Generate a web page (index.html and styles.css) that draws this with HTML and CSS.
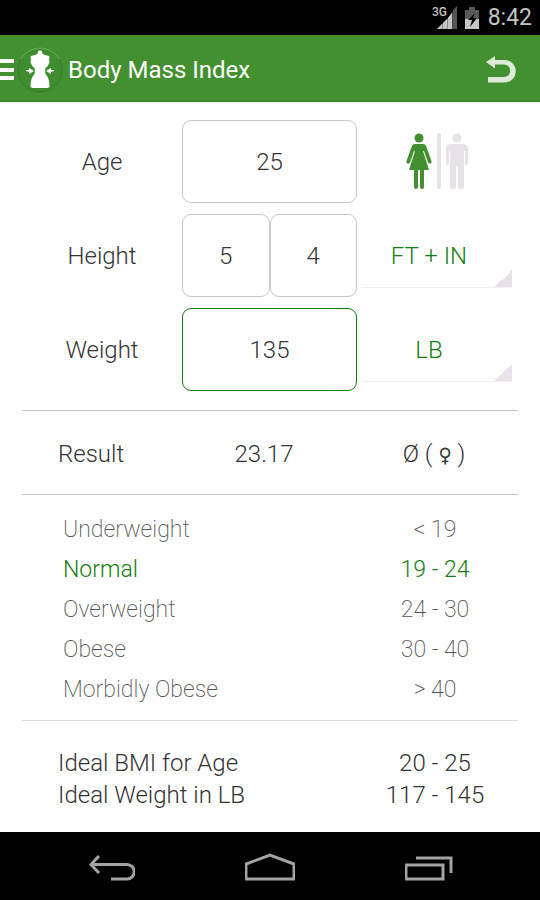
FILE: index.html
```html
<!DOCTYPE html>
<html lang="en">
<head>
<meta charset="utf-8">
<meta name="viewport" content="width=device-width, initial-scale=1">
<title>Body Mass Index</title>
<link rel="stylesheet" href="styles.css">
</head>
<body>
<div class="status">
  <svg class="status-signal" viewBox="0 0 24 24" aria-label="Signal">
    <path fill="#555" d="M19 4l4-4v23h-4z"/>
    <path fill="#888" d="M3 23L14 12l4.500-6v17z"/>
    <path fill="#c4c4c4" d="M3 23l5-5v5zM9 17l4-4v10H9zM14 12l4-5v16h-4z"/>
  </svg>
  <span class="status-net">3G</span>
  <svg class="status-battery" viewBox="0 0 16 22" aria-label="Battery">
    <path fill="#5a5a5a" d="M1 3h4V0h6v3h4v9H1z"/>
    <path fill="#c4c4c4" d="M1 12h14v10H1z"/>
    <path fill="#000" d="M11 6L4 13h4l-2 7 7-9H9z"/>
  </svg>
  <span class="status-time">8:42</span>
</div>
<header class="bar">
  <button class="menu" type="button" aria-label="Menu">
    <svg class="menu-lines" viewBox="0 0 14 22"><path fill="#fff" d="M0 0h14v4H0zM0 9h14v4H0zM0 17h14v4H0z"/></svg>
    <svg class="logo" viewBox="0 0 48 48">
      <circle cx="24" cy="24" r="22" fill="#408d2f" stroke="#387d2a"/>
      <path d="M5 13A22 22 0 0 1 43 13" fill="none" stroke="#76b166"/>
      <path fill="#fff" d="M22 5q2-1 4 0l.5 3q3 1.500 7 2-1 3 0 6-1 4-4 6-1 3 0 6 4 4 4 12 0 2-3.500 2H18q-3.500 0-3.500-2 0-8 4-12 1-3 0-6-3-2-4-6 1-3 0-6 4-.5 7-2z"/>
      <path fill="#fff" d="M10 24h3v-2l5 3-5 3v-2l-3-1zM38 24h-3v-2l-5 3 5 3v-2l3-1z"/>
    </svg>
  </button>
  <h1 class="title">Body Mass Index</h1>
  <button class="undo" type="button" aria-label="Undo">
    <svg class="undo-icon" viewBox="0 0 30 27"><path fill="#deebd9" d="M0 6l9-6v4h9.500a11.250 11.250 0 0 1 0 22.500H2V21h16a6.250 6.250 0 0 0 0-12.500H9V12.500z"/></svg>
  </button>
</header>
<main class="content">
  <form class="form">
    <label class="name" for="age">Age</label>
    <input class="box" id="age" type="text" inputmode="numeric" value="25">
    <fieldset class="gender">
      <label class="person person-on">
        <input class="radio" type="radio" name="gender" aria-label="Female" checked>
        <svg class="woman" viewBox="0 0 26 56"><circle cx="13" cy="5" r="4.500"/><path d="M9 11h8q2.500 0 3.500 3l5 14q.5 2-1 2.500t-2.500-1L18 18h-1l6 19h-5v17q0 2-2 2t-2-2V37h-2v17q0 2-2 2t-2-2V37H3l6-19H8L4 29.500q-1 1.500-2.500 1T.5 28l5-14q1-3 3.500-3z"/></svg>
      </label>
      <span class="gender-line"></span>
      <label class="person">
        <input class="radio" type="radio" name="gender" aria-label="Male">
        <svg class="man" viewBox="0 0 22 56"><circle cx="11" cy="5" r="4.500"/><path d="M5 11h12q5 0 5 5v14q0 2-1.500 2T19 30V18h-1v36q0 2-3 2T12 54V33h-2v21q0 2-3 2T4 54V18H3v12q0 2-1.500 2T0 30V16q0-5 5-5z"/></svg>
      </label>
    </fieldset>

    <label class="name" for="feet">Height</label>
    <div class="pair">
      <input class="box" id="feet" type="text" inputmode="numeric" value="5">
      <input class="box" type="text" inputmode="numeric" value="4" aria-label="Inches">
    </div>
    <select class="unit" aria-label="Height unit"><option>FT + IN</option></select>

    <label class="name" for="weight">Weight</label>
    <input class="box box-active" id="weight" type="text" inputmode="numeric" value="135">
    <select class="unit" aria-label="Weight unit"><option>LB</option></select>
  </form>

  <section class="result">
    <span class="result-name">Result</span>
    <output>23.17</output>
    <span>Ø ( <span class="sign">♀</span> )</span>
  </section>

  <table class="table ranges">
    <tr><th>Underweight</th><td>&lt; 19</td></tr>
    <tr class="current"><th>Normal</th><td>19 - 24</td></tr>
    <tr><th>Overweight</th><td>24 - 30</td></tr>
    <tr><th>Obese</th><td>30 - 40</td></tr>
    <tr><th>Morbidly Obese</th><td>&gt; 40</td></tr>
  </table>

  <section class="ideals">
    <table class="table ideal">
      <tr><th>Ideal BMI for Age</th><td>20 - 25</td></tr>
      <tr><th>Ideal Weight in LB</th><td>117 - 145</td></tr>
    </table>
  </section>
</main>
<nav class="nav">
  <button class="nav-button" type="button" aria-label="Back">
    <svg class="nav-icon" viewBox="0 0 50 30"><path d="M14 4L6 12.500 14 21M7 12.500h35a7 7 0 0 1 0 14.500H26"/></svg>
  </button>
  <button class="nav-button" type="button" aria-label="Home">
    <svg class="nav-icon" viewBox="0 0 50 30"><path d="M1 27V12L25 3l24 9v15z"/></svg>
  </button>
  <button class="nav-button" type="button" aria-label="Recent apps">
    <svg class="nav-icon" viewBox="0 0 50 30"><path d="M1 13h37v14H1zM11 6h35v15"/></svg>
  </button>
</nav>
</body>
</html>
```
FILE: styles.css
```css
* { box-sizing: border-box; }

body {
  display: flex;
  flex-direction: column;
  min-height: 100vh;
  margin: 0;
  background: #fff;
  color: #333;
  font: 300 24px/32px Roboto, "Liberation Sans", sans-serif;
}

button, input, select { font: inherit; color: inherit; }

button {
  padding: 0;
  border: 0;
  background: none;
}

svg { display: block; }

.status {
  display: flex;
  align-items: center;
  justify-content: flex-end;
  height: 35px;
  padding-right: 8px;
  background: #000;
  color: #c4c4c4;
  position: relative;
}

.status-signal { width: 24px; height: 24px; }

.status-net {
  position: absolute;
  top: 6px;
  right: 93px;
  font-size: 12px;
  line-height: 12px;
  font-weight: 500;
}

.status-battery { width: 16px; height: 22px; margin: 0 8px 0 6px; }
.status-time { font-size: 23px; font-weight: 400; }

.bar {
  display: flex;
  align-items: center;
  height: 67px;
  padding: 3px 24px 0 0;
  background: #429030;
  border-bottom: 1px solid #3a7f2b;
  color: #fff;
}

.menu { display: flex; align-items: center; gap: 2px; }
.menu-lines { width: 14px; height: 22px; }
.logo { width: 48px; height: 48px; }

.title {
  flex: 1;
  margin: 0 0 0 4px;
  font-size: 24px;
  font-weight: 400;
}

.undo-icon { width: 30px; height: 27px; }

.content { flex: 1; }

.form {
  display: grid;
  grid-template-columns: 160fr 175fr 161fr;
  grid-auto-rows: 83px;
  row-gap: 11px;
  margin: 0 22px;
  padding: 18px 0 19px;
  border-bottom: 1px solid #c8c8c8;
}

.name { place-self: center; }

.box {
  width: 100%;
  min-width: 0;
  height: 100%;
  padding: 0;
  border: 1px solid #c8c8c8;
  border-radius: 9px;
  background: none;
  text-align: center;
}

.box-active { border-color: #158012; }
.pair { display: flex; }

.gender {
  display: flex;
  justify-content: center;
  gap: 5px;
  align-self: center;
  margin: 0;
  padding: 0 2px 2px 0;
  border: 0;
}

.person { position: relative; fill: #e6e2e6; }
.person-on { fill: #429030; }
.radio { position: absolute; inset: 0; margin: 0; opacity: 0; }
.woman { width: 26px; height: 56px; }
.man { width: 22px; height: 56px; }
.gender-line { width: 4px; border-radius: 2px; background: #e6e2e6; }

.unit {
  appearance: none;
  height: 74px;
  margin: 0 6px 0 5px;
  padding: 10px 16px 0 0;
  border: 0;
  border-bottom: 1px solid #f1eff1;
  border-radius: 0;
  background: linear-gradient(135deg, transparent 50%, #e6e2e6 50%) right bottom / 17px 17px no-repeat;
  color: #158012;
  text-align: center;
  text-align-last: center;
}

.result {
  display: grid;
  grid-template-columns: 156fr 172fr 168fr;
  align-items: center;
  height: 84px;
  padding-top: 2px;
  margin: 0 22px;
  border-bottom: 1px solid #c8c8c8;
  text-align: center;
}

.result-name { padding-left: 36px; text-align: left; }

.sign {
  font-family: "DejaVu Sans Condensed", "DejaVu Sans", sans-serif;
  font-size: 20px;
  line-height: 20px;
}

.table {
  width: 100%;
  border-collapse: collapse;
}

.table th {
  padding: 0 0 0 58px;
  font-weight: inherit;
  text-align: left;
}

.table td {
  width: 210px;
  padding: 0;
  text-align: center;
}

.ranges {
  margin: 15px 0 10px;
  color: #555;
  font-size: 23px;
  font-weight: 200;
  line-height: 40px;
}

.ranges th { padding-left: 63px; }
.current { color: #158012; font-weight: 300; }

.ideals {
  margin: 0 22px;
  padding: 26px 0 21px;
  border-top: 1px solid #dcdcdc;
}

.ideals th { padding-left: 36px; }
.ideals td { width: 166px; }

.nav {
  display: flex;
  justify-content: space-around;
  height: 68px;
  padding: 2px 30px 0;
  background: #000;
}

.nav-button { flex: 1; display: grid; place-items: center; }

.nav-icon {
  width: 50px;
  height: 30px;
  fill: none;
  stroke: #a3a3a3;
  stroke-width: 3px;
}
```
